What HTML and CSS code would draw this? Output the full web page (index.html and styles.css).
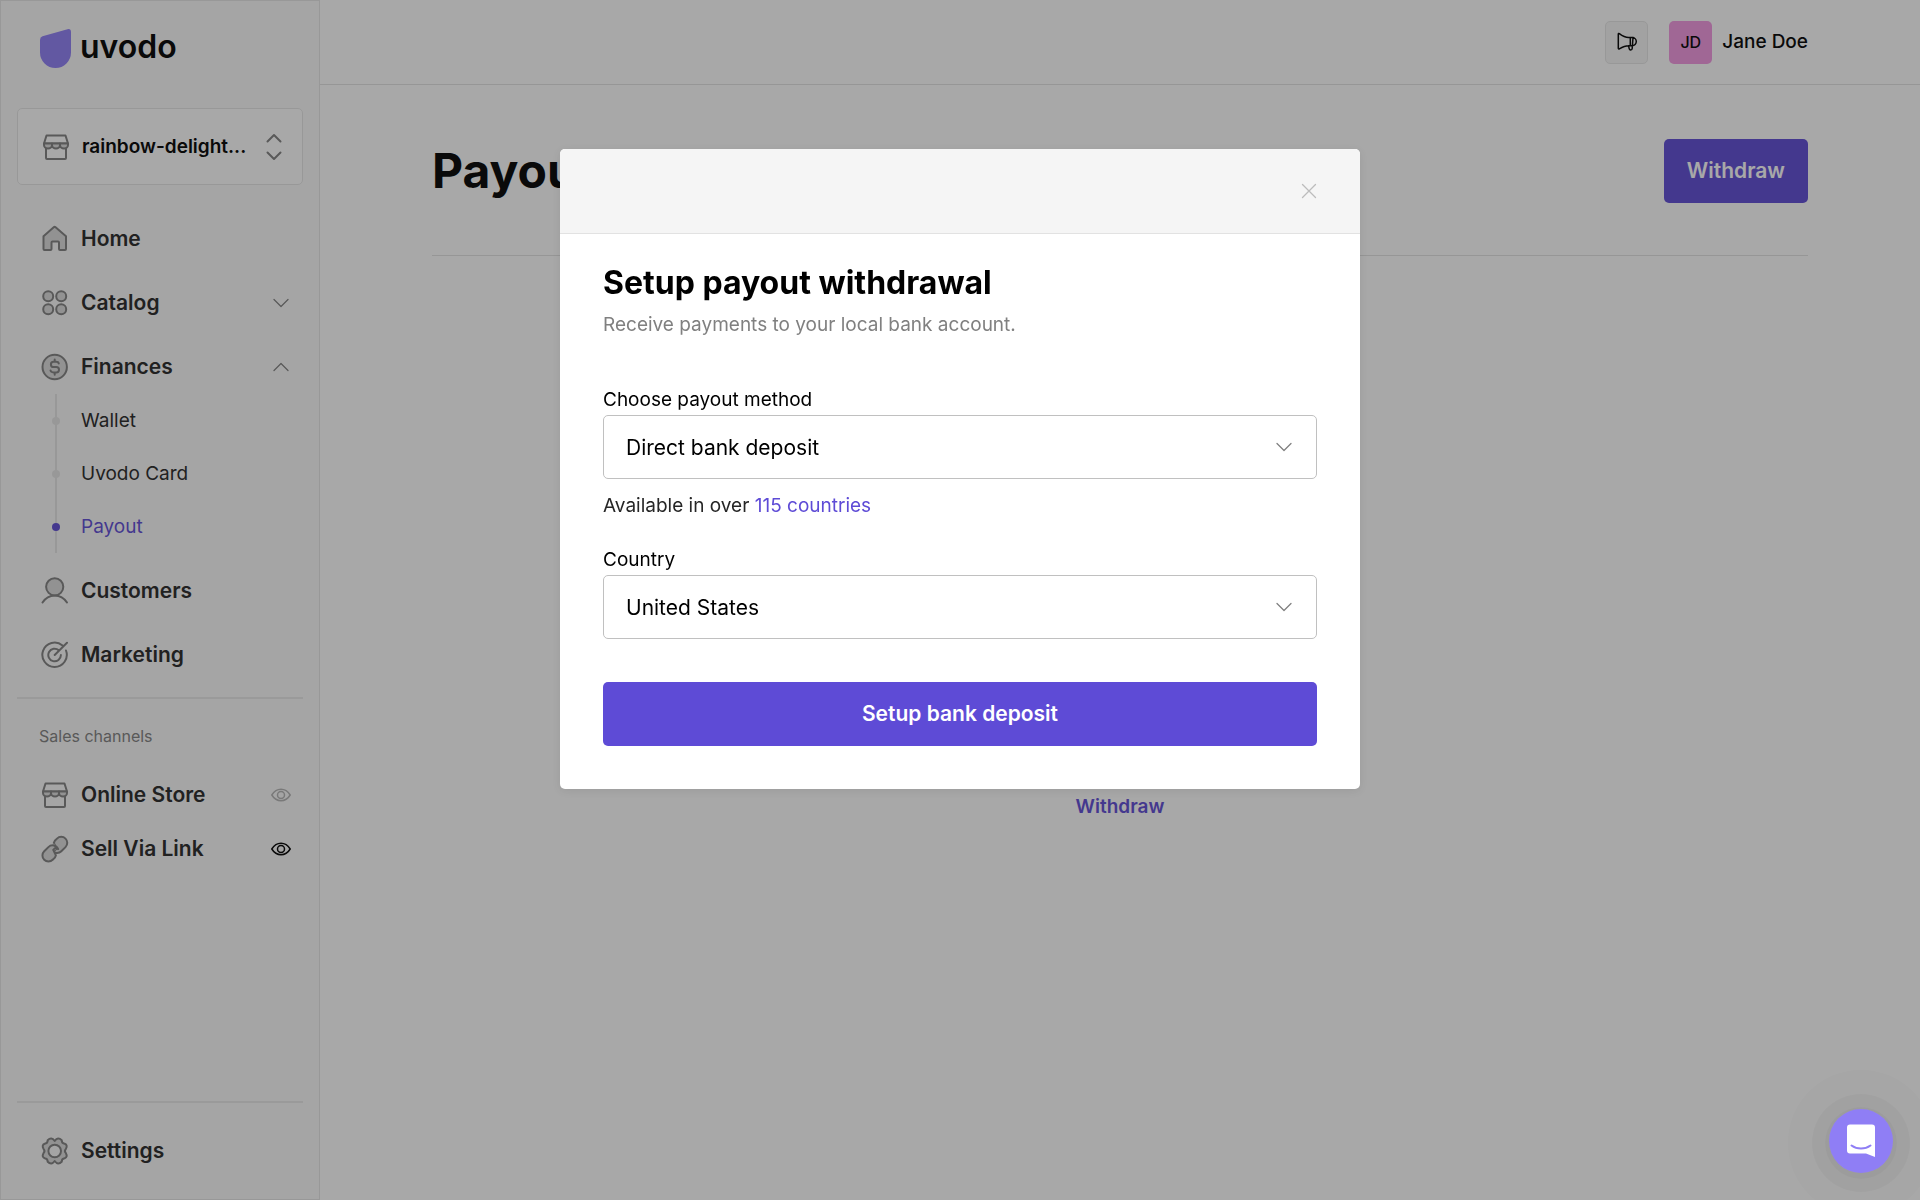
FILE: index.html
```html
<!DOCTYPE html>
<html lang="en">
<head>
  <meta charset="UTF-8">
  <meta name="viewport" content="width=device-width, initial-scale=1.0">
  <title>Payouts - Uvodo</title>
  <link rel="stylesheet" href="styles.css">
</head>
<body>
  <!-- Shared icons -->
  <svg class="sprite" aria-hidden="true">
    <symbol id="icon-store" viewBox="0 0 28 28">
      <path d="M4.500 2.500h19l2.500 8H2z"/>
      <path d="M4 14.500v10.500a1 1 0 0 0 1 1h18a1 1 0 0 0 1-1V14.500"/>
      <path class="fill" d="M2 10.500v1.500a4 3.500 0 0 0 8 0 4 3.500 0 0 0 8 0 4 3.500 0 0 0 8 0v-1.500z"/>
      <path d="M10 10.500v1.500M18 10.500v1.500"/>
    </symbol>
    <symbol id="icon-chevron" viewBox="0 0 20 20">
      <path d="M3 6.500l7 7 7-7"/>
    </symbol>
    <symbol id="icon-eye" viewBox="0 0 20 20">
      <path d="M.8 10C5.500 2.300 14.500 2.300 19.200 10 14.500 17.700 5.500 17.700.8 10z"/>
      <circle cx="10" cy="10" r="3.500"/>
    </symbol>
  </svg>

  <div class="app">
    <aside class="sidebar">
      <a class="logo" href="#">
        <svg width="32" height="40" viewBox="0 0 32 40" aria-hidden="true">
          <path d="M2.500 7.300L27.500.2Q31 -.5 31 3V23.500a15.500 15.500 0 0 1-31 0V11Q0 8 2.500 7.300z"/>
        </svg>
        <span>uvodo</span>
      </a>

      <button type="button" class="store-switch">
        <svg class="icon"><use href="#icon-store"/></svg>
        <span class="store-name">rainbow-delight...</span>
        <svg class="switch-arrows" viewBox="0 0 16 28"><path d="M1.500 8.500L8 2l6.500 6.500M1.500 19.500L8 26l6.500-6.500"/></svg>
      </button>

      <!-- Main navigation -->
      <nav class="nav">
        <a class="nav-item" href="#">
          <svg class="icon" viewBox="0 0 28 28"><path class="fill" d="M2.500 11.200L13 2a1 1 0 0 1 1.300 0l10.700 9.200v12.800a1 1 0 0 1-1 1h-5a1 1 0 0 1-1-1v-6.500a1 1 0 0 0-1-1h-5.500a1 1 0 0 0-1 1V24a1 1 0 0 1-1 1h-6a1 1 0 0 1-1-1z"/></svg>
          <span>Home</span>
        </a>
        <a class="nav-item" href="#">
          <svg class="icon" viewBox="0 0 28 28"><g class="fill"><circle cx="7.200" cy="7.200" r="5"/><circle cx="20.200" cy="7.200" r="5"/><circle cx="7.200" cy="20.200" r="5"/><circle cx="20.200" cy="20.200" r="5"/></g></svg>
          <span>Catalog</span>
          <svg class="chevron"><use href="#icon-chevron"/></svg>
        </a>
        <div class="nav-group">
          <a class="nav-item" href="#">
            <svg class="icon" viewBox="0 0 28 28"><circle class="fill" cx="13.700" cy="14" r="12.200"/><path d="M17.800 10.500c-.3-1.300-1.300-1.700-2.800-1.700h-2.500a2.500 2.500 0 0 0 0 5.200h2.800a2.700 2.700 0 0 1 0 5.400h-2.800c-1.600 0-2.700-.6-3-2M13.700 6.500v2.300M13.700 19.400v2.300"/></svg>
            <span>Finances</span>
            <svg class="chevron chevron-up"><use href="#icon-chevron"/></svg>
          </a>
          <ul class="subnav">
            <li><a href="#">Wallet</a></li>
            <li><a href="#">Uvodo Card</a></li>
            <li><a class="active" href="#">Payout</a></li>
          </ul>
        </div>
        <a class="nav-item" href="#">
          <svg class="icon" viewBox="0 0 28 28"><circle class="fill" cx="13.700" cy="9.800" r="8.600"/><path d="M1.500 25.500c6-9.500 18.500-9.500 24.500 0"/></svg>
          <span>Customers</span>
        </a>
        <a class="nav-item" href="#">
          <svg class="icon" viewBox="0 0 28 28"><path d="M21.500 4.500A12.200 12.200 0 1 0 25 9.500M17.800 9.300A6.300 6.300 0 1 0 19.900 14M13.700 14L26 1.700"/></svg>
          <span>Marketing</span>
        </a>
      </nav>

      <!-- Sales channels -->
      <section class="channels">
        <h2>Sales channels</h2>
        <a class="nav-item" href="#">
          <svg class="icon"><use href="#icon-store"/></svg>
          <span>Online Store</span>
          <svg class="eye"><use href="#icon-eye"/></svg>
        </a>
        <a class="nav-item" href="#">
          <svg class="icon" viewBox="0 0 28 28"><path class="fill" d="M12.800 8l1-2.200 2.200-2.200a6 6 0 0 1 8.500 8.500l-4.200 4.200a6 6 0 0 1-9.800-2l3 1.200 2-2z"/><path class="line-cover" d="M12.800 8l-2.300 6.300 3 1.200 2-2z"/><path class="fill" d="M14.900 20.400l-1 2.200-2.200 2.200a6 6 0 0 1-8.500-8.500l4.200-4.200a6 6 0 0 1 9.800 2l-3-1.200-2 2z"/></svg>
          <span>Sell Via Link</span>
          <svg class="eye eye-on"><use href="#icon-eye"/></svg>
        </a>
      </section>

      <div class="sidebar-footer">
        <a class="nav-item" href="#">
          <svg class="icon" viewBox="0 0 28 28"><path class="fill" d="M13.700 4q3.300-4.500 7 -.7 0 3.300 3 3.500 3.300 1.200 1.200 5-2 2.200 0 4.400 2.100 3.800-1.200 5-3 .2-3 3.500-3.700 3.800-7-.7-3.300 4.500-7 .7 0-3.300-3-3.500-3.300-1.200-1.200-5 2-2.200 0-4.400-2.100-3.800 1.200-5 3-.2 3-3.500 3.700-3.800 7 .7z"/><circle class="hole" cx="13.700" cy="14" r="6.300"/></svg>
          <span>Settings</span>
        </a>
      </div>
    </aside>

    <div class="page">
      <header class="topbar">
        <button type="button" class="news" aria-label="News">
          <svg viewBox="0 0 22 22"><path d="M2.300 3.200c0-.7.500-.9 1-.6C6.500 5 9.500 6.500 12.500 6.500h3.700a4 4 0 0 1 0 8.200h-3.700c-3 0-6 1.300-9.200 3.200-.5.300-1 0-1-.6zM14.300 6.500v8.200M17 6.500l-.8 11c-.2 2-2.700 2-3 .2l-.7-3"/></svg>
        </button>
        <a class="user" href="#">
          <span class="avatar">JD</span>
          <span>Jane Doe</span>
        </a>
      </header>

      <main class="content">
        <div class="page-head">
          <h1>Payouts</h1>
          <button type="button" class="btn">Withdraw</button>
        </div>
        <div class="empty">
          <a href="#">Withdraw</a>
        </div>
      </main>
    </div>
  </div>

  <!-- Payout setup dialog -->
  <div class="overlay">
    <div class="modal" role="dialog" aria-labelledby="modalTitle">
      <div class="modal-head">
        <button type="button" class="close" aria-label="Close">
          <svg viewBox="0 0 16 16"><path d="M1.500 1.500l13 13M14.500 1.500l-13 13"/></svg>
        </button>
      </div>
      <form class="modal-body">
        <h2 id="modalTitle">Setup payout withdrawal</h2>
        <p class="lead">Receive payments to your local bank account.</p>

        <div class="field">
          <label for="method">Choose payout method</label>
          <div class="select">
            <select id="method" name="method">
              <option>Direct bank deposit</option>
            </select>
            <svg class="chevron"><use href="#icon-chevron"/></svg>
          </div>
          <p class="help">Available in over <a href="#">115 countries</a></p>
        </div>

        <div class="field">
          <label for="country">Country</label>
          <div class="select">
            <select id="country" name="country">
              <option>United States</option>
            </select>
            <svg class="chevron"><use href="#icon-chevron"/></svg>
          </div>
        </div>

        <button type="button" class="btn btn-block">Setup bank deposit</button>
      </form>
    </div>
  </div>

  <!-- Chat launcher -->
  <button type="button" class="chat" aria-label="Open chat">
    <svg viewBox="0 0 30 34"><path fill="#fff" d="M4 0.500h22a3 3 0 0 1 3 3V33l-9-3.500H4a3 3 0 0 1-3-3v-23a3 3 0 0 1 3-3z"/><path class="smile" d="M5.500 21.500c5.500 4 13.500 4 19 0"/></svg>
  </button>
</body>
</html>
```
FILE: styles.css
```css
* {
  box-sizing: border-box;
}

body {
  margin: 0;
  font-family: Inter, "Liberation Sans", sans-serif;
  font-size: 19px;
  line-height: 28px;
  color: #000;
  background-color: #fff;
}

h1,
h2,
p,
ul {
  margin: 0;
  padding: 0;
}

a {
  color: inherit;
  text-decoration: none;
}

button,
select {
  font: inherit;
  color: inherit;
  cursor: pointer;
}

svg {
  fill: none;
  stroke: currentColor;
  stroke-linecap: round;
  stroke-linejoin: round;
  flex-shrink: 0;
}

.sprite {
  display: none;
}

.app {
  display: flex;
  min-height: 100vh;
}

/* Sidebar */
.sidebar {
  display: flex;
  flex-direction: column;
  width: 320px;
  padding: 28px 16px 21px;
  border: 1px solid #e6e6e6;
  background-color: #fbfbfb;
}

.logo {
  display: flex;
  gap: 8px;
  height: 40px;
  margin: 0 0 39px 23px;
  font-size: 32px;
  line-height: 36px;
  font-weight: 600;
}

.logo svg {
  fill: #8f7ef5;
  stroke: none;
}

.store-switch {
  display: flex;
  align-items: center;
  gap: 12px;
  height: 77px;
  margin-bottom: 27px;
  padding: 0 20px 0 24px;
  border: 1px solid #e6e6e6;
  border-radius: 5px;
  background-color: #fff;
  font-weight: 600;
}

.store-name {
  flex: 1;
  text-align: left;
}

.icon {
  width: 28px;
  height: 28px;
  color: #808080;
  stroke-width: 2;
}

.fill {
  fill: #dcdcdc;
}

.hole {
  fill: #fbfbfb;
}

.line-cover {
  fill: #dcdcdc;
  stroke: none;
}

.switch-arrows {
  width: 16px;
  height: 28px;
  color: #808080;
  stroke-width: 2;
}

.chevron {
  width: 20px;
  height: 20px;
  color: #808080;
  stroke-width: 1.3;
}

.chevron-up {
  transform: rotate(180deg);
}

.nav {
  display: flex;
  flex-direction: column;
  gap: 10px;
}

.nav-item {
  display: flex;
  align-items: center;
  gap: 12px;
  height: 54px;
  padding: 0 12px 0 24px;
  font-size: 21px;
  font-weight: 600;
  color: #262626;
}

.nav-item span {
  flex: 1;
}

.subnav {
  list-style: none;
  margin: 0 0 1px 38px;
  border-left: 2px solid #e6e6e6;
}

.subnav a {
  display: flex;
  align-items: center;
  gap: 21px;
  height: 53px;
  margin-left: -5px;
  color: #262626;
}

.subnav a::before {
  content: "";
  width: 8px;
  height: 8px;
  border-radius: 50%;
  background-color: #e6e6e6;
}

.subnav .active {
  color: #5e4bd6;
}

.subnav .active::before {
  background-color: #5e4bd6;
}

.channels {
  margin-top: 15px;
  padding-top: 23px;
  border-top: 2px solid #e9e9e9;
}

.channels h2 {
  margin: 0 0 18px 22px;
  font-size: 16px;
  font-weight: 400;
  color: #808080;
}

.eye {
  width: 20px;
  height: 20px;
  color: #b4b4b4;
  stroke-width: 1.5;
}

.eye-on {
  color: #000;
}

.sidebar-footer {
  margin-top: auto;
  padding-top: 21px;
  border-top: 2px solid #e9e9e9;
}

/* Page */
.page {
  flex: 1;
  display: flex;
  flex-direction: column;
}

.topbar {
  display: flex;
  align-items: center;
  justify-content: flex-end;
  gap: 21px;
  height: 85px;
  padding: 0 112px;
  border-bottom: 1px solid #e2e2e2;
}

.news {
  display: grid;
  place-items: center;
  width: 43px;
  height: 43px;
  padding: 0;
  border: 1px solid #e6e6e6;
  border-radius: 5px;
  background-color: #f5f5f5;
}

.news svg {
  width: 22px;
  height: 22px;
  stroke-width: 1.5;
}

.user {
  display: flex;
  align-items: center;
  gap: 10px;
  font-weight: 500;
}

.avatar {
  display: grid;
  place-items: center;
  width: 43px;
  height: 43px;
  border-radius: 5px;
  background-color: #f296e0;
  font-size: 16px;
}

.content {
  flex: 1;
  padding: 0 112px;
}

.page-head {
  display: flex;
  align-items: center;
  justify-content: space-between;
  height: 171px;
  padding-top: 2px;
  border-bottom: 1px solid #e2e2e2;
}

.page-head h1 {
  font-size: 48px;
  line-height: 64px;
  font-weight: 700;
}

.btn {
  height: 64px;
  padding: 0 23px;
  border: none;
  border-radius: 5px;
  background-color: #5e4bd6;
  color: #fff;
  font-size: 21px;
  font-weight: 600;
}

.btn-block {
  width: 100%;
}

.empty {
  padding-top: 537px;
  text-align: center;
  font-weight: 600;
  color: #5e4bd6;
}

/* Modal */
.overlay {
  position: fixed;
  inset: 0;
  padding: 149px 20px 0;
  background-color: rgba(26, 26, 26, 0.38);
}

.modal {
  max-width: 800px;
  margin: 0 auto;
  border-radius: 5px;
  background-color: #fff;
  box-shadow: 0 2px 8px rgba(0, 0, 0, 0.08);
}

.modal-head {
  display: flex;
  align-items: center;
  justify-content: flex-end;
  height: 85px;
  padding: 0 43px;
  border-bottom: 1px solid #e2e2e2;
  border-radius: 5px 5px 0 0;
  background-color: #f5f5f5;
}

.close {
  display: grid;
  padding: 0;
  border: none;
  background: none;
  color: #bcbcbc;
}

.close svg {
  width: 16px;
  height: 16px;
  stroke-width: 1.3;
}

.modal-body {
  padding: 28px 43px 43px;
}

.modal-body h2 {
  font-size: 32px;
  line-height: 42px;
  font-weight: 700;
}

.lead {
  margin: 7px 0 47px;
  color: #808080;
}

.field {
  margin-bottom: 26px;
}

.field label {
  display: block;
  margin-bottom: 1px;
}

.select {
  display: grid;
  align-items: center;
}

.select select,
.select .chevron {
  grid-area: 1 / 1;
}

.select select {
  appearance: none;
  width: 100%;
  height: 64px;
  padding: 1px 22px 0;
  border: 1px solid #c0c0c0;
  border-radius: 5px;
  background-color: #fff;
  font-size: 21px;
}

.select .chevron {
  justify-self: end;
  margin-right: 23px;
  pointer-events: none;
}

.help {
  margin-top: 13px;
  color: #262626;
}

.help a {
  color: #5e4bd6;
}

.field + .btn {
  margin-top: 17px;
}

/* Chat launcher */
.chat {
  position: fixed;
  right: 27px;
  bottom: 27px;
  display: grid;
  place-items: center;
  width: 64px;
  height: 64px;
  padding: 0;
  border: none;
  border-radius: 50%;
  background-color: #8f7ef5;
  box-shadow: 0 2px 0 4px rgba(0, 0, 0, 0.03), 0 2px 0 17px rgba(0, 0, 0, 0.03), 0 2px 0 41px rgba(0, 0, 0, 0.01);
}

.chat svg {
  width: 30px;
  height: 34px;
  stroke: none;
}

.chat .smile {
  stroke: #8f7ef5;
  stroke-width: 2;
}
```
